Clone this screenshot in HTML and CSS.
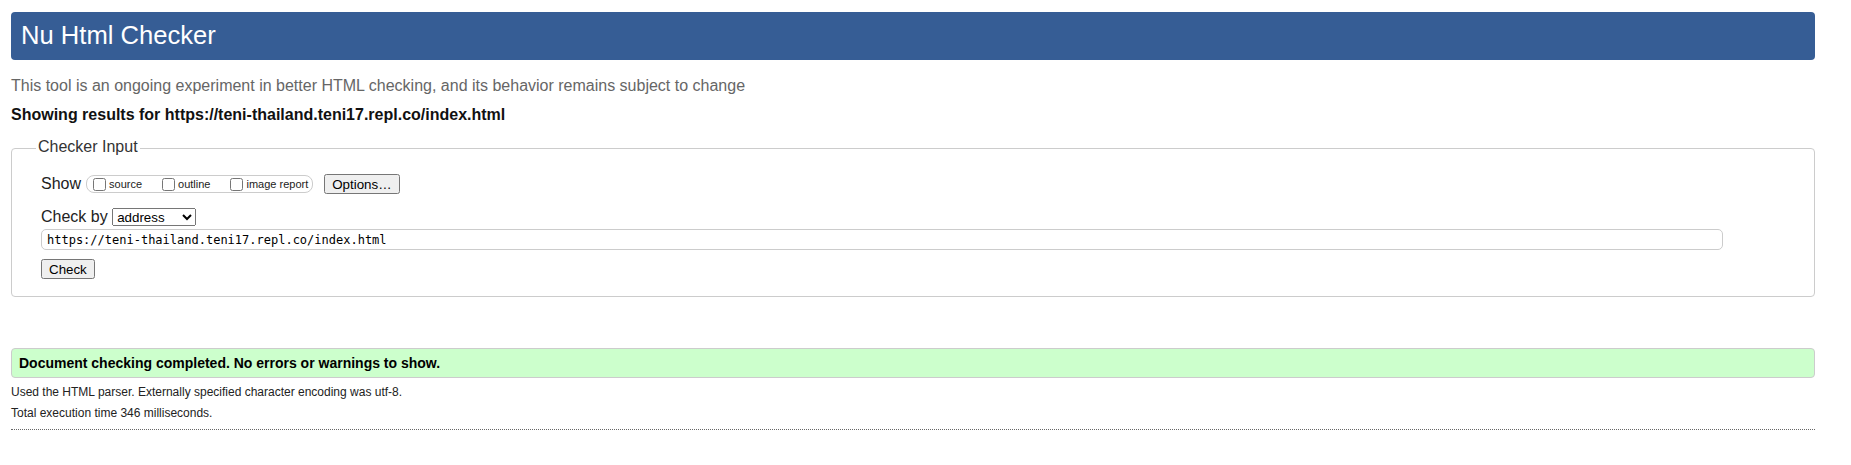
FILE: index.html
```html
<!DOCTYPE html>
<html lang="en">
<head>
<meta charset="utf-8">
<title>Nu Html Checker</title>
<link rel="stylesheet" href="styles.css">
</head>
<body>
<div class="page">
  <h1 class="title">Nu Html Checker</h1>
  <p class="tagline">This tool is an ongoing experiment in better HTML checking, and its behavior remains subject to change</p>
  <p class="showing">Showing results for https://teni-thailand.teni17.repl.co/index.html</p>
  <form class="checker-form">
    <fieldset class="input-box">
      <legend class="input-legend">Checker Input</legend>
      <div class="show-row">
        <span class="row-label">Show</span>
        <span class="opts-group">
          <label class="opt"><input type="checkbox" class="opt-check"><span>source</span></label>
          <label class="opt"><input type="checkbox" class="opt-check"><span>outline</span></label>
          <label class="opt"><input type="checkbox" class="opt-check"><span>image report</span></label>
        </span>
        <button type="button" class="btn btn-options">Options…</button>
      </div>
      <div class="by-row">Check by <select class="by-select"><option>address</option><option>file upload</option><option>text input</option></select></div>
      <div class="url-row"><input type="text" class="url-input" value="https://teni-thailand.teni17.repl.co/index.html"></div>
      <div class="submit-row"><button type="button" class="btn btn-check">Check</button></div>
    </fieldset>
  </form>
  <div class="success">Document checking completed. No errors or warnings to show.</div>
  <p class="details">Used the HTML parser. Externally specified character encoding was utf-8.</p>
  <p class="details details-second">Total execution time 346 milliseconds.</p>
  <div class="divider"></div>
</div>
</body>
</html>
```
FILE: styles.css
```css
html, body {
  margin: 0;
  padding: 0;
  background: #ffffff;
}

body {
  font-family: "Liberation Sans", Arial, sans-serif;
  color: #222;
}

.page {
  width: 1804px;
  margin: 12px 0 0 11px;
}

.title {
  margin: 0;
  height: 48px;
  box-sizing: border-box;
  padding: 8px 10px 10px;
  background: #365d95;
  color: #ffffff;
  border-radius: 4px;
  font-size: 25.6px;
  font-weight: normal;
  line-height: 30px;
}

.tagline {
  margin: 16px 0 0;
  font-size: 16px;
  line-height: 20px;
  color: #666;
}

.showing {
  margin: 9px 0 0;
  font-size: 16px;
  line-height: 20px;
  font-weight: bold;
  color: #111;
}

.checker-form {
  margin: 12px 0 0;
}

.input-box {
  margin: 0;
  padding: 14px 28px 17px 29px;
  border: 1px solid #cccccc;
  border-radius: 4px;
  min-width: 0;
}

.input-legend {
  margin-left: -5px;
  padding: 0 2px 4px;
  font-size: 16px;
  line-height: 19px;
  color: #333;
}

.show-row {
  display: flex;
  align-items: center;
  height: 20px;
  font-size: 16px;
  line-height: 20px;
}

.row-label {
  margin-right: 5px;
}

.opts-group {
  display: inline-flex;
  align-items: center;
  gap: 16px;
  height: 18px;
  box-sizing: border-box;
  padding: 0 4px 0 2px;
  border: 1px solid #cccccc;
  border-radius: 8px;
  font-size: 11px;
  line-height: 13px;
}

.opt {
  display: inline-flex;
  align-items: flex-end;
}

.opt-check {
  width: 13px;
  height: 13px;
  margin: 0 3px 0 4px;
}

.btn {
  font-family: "Liberation Sans", Arial, sans-serif;
  font-size: 13.33px;
  height: 20px;
  padding: 1px 6px;
  line-height: 15px;
  color: #000;
}

.btn-options {
  margin-left: 11px;
}

.by-row {
  margin-top: 13px;
  font-size: 16px;
  line-height: 20px;
}

.by-select {
  margin: 0;
  width: 84px;
  height: 18px;
  font-family: "Liberation Sans", Arial, sans-serif;
  font-size: 13.33px;
  color: #000;
}

.url-row {
  display: flex;
  margin-top: 2px;
}

.url-input {
  width: 1682px;
  height: 21px;
  box-sizing: border-box;
  margin: 0;
  padding: 0 5px;
  border: 1px solid #cccccc;
  border-radius: 5px;
  font-family: "DejaVu Sans Mono", "Liberation Mono", monospace;
  font-size: 12px;
  color: #000;
  outline: none;
}

.submit-row {
  display: flex;
  margin-top: 9px;
}

.success {
  margin-top: 51px;
  height: 30px;
  box-sizing: border-box;
  padding: 6px 7px;
  background: #ccffcc;
  border: 1px solid #cccccc;
  border-radius: 4px;
  font-size: 14px;
  line-height: 16px;
  font-weight: bold;
  color: #000;
}

.details {
  margin: 7px 0 0;
  font-size: 12px;
  line-height: 14px;
  color: #222;
}

.divider {
  margin-top: 9px;
  border-top: 1px dotted #666;
}
```
